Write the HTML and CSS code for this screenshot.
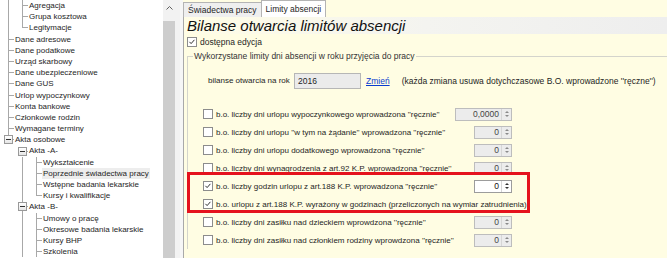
FILE: index.html
```html
<!DOCTYPE html>
<html>
<head>
    <meta charset="utf-8">
    <title>Bilanse otwarcia limitów absencji</title>
    <link rel="stylesheet" href="styles.css">
</head>
<body>
<div class="app">
    <div class="tree">
        <div class="node"><i class="v"></i><i class="t"></i><span>Agregacja</span></div>
        <div class="node"><i class="v"></i><i class="t"></i><span>Grupa kosztowa</span></div>
        <div class="node"><i class="v"></i><i class="l"></i><span>Legitymacje</span></div>
        <div class="node"><i class="t"></i><span>Dane adresowe</span></div>
        <div class="node"><i class="t"></i><span>Dane podatkowe</span></div>
        <div class="node"><i class="t"></i><span>Urząd skarbowy</span></div>
        <div class="node"><i class="t"></i><span>Dane ubezpieczeniowe</span></div>
        <div class="node"><i class="t"></i><span>Dane GUS</span></div>
        <div class="node"><i class="t"></i><span>Urlop wypoczynkowy</span></div>
        <div class="node"><i class="t"></i><span>Konta bankowe</span></div>
        <div class="node"><i class="t"></i><span>Członkowie rodzin</span></div>
        <div class="node"><i class="t"></i><span>Wymagane terminy</span></div>
        <div class="node"><i class="m last"><b></b></i><span>Akta osobowe</span></div>
        <div class="node"><i class="e"></i><i class="m first"><b></b></i><span>Akta -A-</span></div>
        <div class="node"><i class="e"></i><i class="v"></i><i class="t"></i><span>Wykształcenie</span></div>
        <div class="node"><i class="e"></i><i class="v"></i><i class="t"></i><span class="sel">Poprzednie świadectwa pracy</span></div>
        <div class="node"><i class="e"></i><i class="v"></i><i class="t"></i><span>Wstępne badania lekarskie</span></div>
        <div class="node"><i class="e"></i><i class="v"></i><i class="l"></i><span>Kursy i kwalifikacje</span></div>
        <div class="node"><i class="e"></i><i class="m"><b></b></i><span>Akta -B-</span></div>
        <div class="node"><i class="e"></i><i class="v"></i><i class="t"></i><span>Umowy o pracę</span></div>
        <div class="node"><i class="e"></i><i class="v"></i><i class="t"></i><span>Okresowe badania lekarskie</span></div>
        <div class="node"><i class="e"></i><i class="v"></i><i class="t"></i><span>Kursy BHP</span></div>
        <div class="node"><i class="e"></i><i class="v"></i><i class="t"></i><span>Szkolenia</span></div>
    </div>
    <div class="vscroll">
        <div class="arrow">
            <svg width="7" height="4" viewBox="0 0 7 4"><path d="M0.5 3.5 L3.5 0.5 L6.5 3.5" fill="none" stroke="#606060" stroke-width="1"/></svg>
        </div>
        <div class="thumb"></div>
    </div>
    <div class="gap"></div>
    <div class="panel">
        <div class="tabs">
            <div class="tab">Świadectwa pracy</div>
            <div class="tab active">Limity absencji</div>
        </div>
        <div class="page">
            <div class="title">Bilanse otwarcia limitów absencji</div>
            <div class="chk-line"><span class="cb on"><svg viewBox="0 0 10 10"><path d="M1.8 4.8 L3.9 7 L8 2.3" fill="none" stroke="#2a2a2a" stroke-width="1.2"/></svg></span><span class="txt">dostępna edycja</span></div>
            <fieldset class="group">
                <legend>Wykorzystane limity dni absencji w roku przyjęcia do pracy</legend>
                <div class="year">
                    <span class="year-label">bilanse otwarcia na rok</span>
                    <span class="year-input">2016</span>
                    <a class="link">Zmień</a>
                    <span class="note">(każda zmiana usuwa dotychczasowe B.O. wprowadzone ''ręczne'')</span>
                </div>
                <div class="opts">
                    <div class="opt"><span class="cb"></span><span class="txt">b.o. liczby dni urlopu wypoczynkowego wprowadzona ''ręcznie''</span>
                        <span class="spin wide"><span class="val">0,0000</span><span class="btns"><em class="up"></em><em class="down"></em></span></span></div>
                    <div class="opt"><span class="cb"></span><span class="txt">b.o. liczby dni urlopu ''w tym na żądanie'' wprowadzona ''ręcznie''</span>
                        <span class="spin"><span class="val">0</span><span class="btns"><em class="up"></em><em class="down"></em></span></span></div>
                    <div class="opt"><span class="cb"></span><span class="txt">b.o. liczby dni urlopu dodatkowego wprowadzona ''ręcznie''</span>
                        <span class="spin"><span class="val">0</span><span class="btns"><em class="up"></em><em class="down"></em></span></span></div>
                    <div class="opt"><span class="cb"></span><span class="txt">b.o. liczby dni wynagrodzenia z art.92 K.P. wprowadzona ''ręcznie''</span>
                        <span class="spin"><span class="val">0</span><span class="btns"><em class="up"></em><em class="down"></em></span></span></div>
                    <div class="opt"><span class="cb on"><svg viewBox="0 0 10 10"><path d="M1.8 4.8 L3.9 7 L8 2.3" fill="none" stroke="#2a2a2a" stroke-width="1.2"/></svg></span><span class="txt">b.o. liczby godzin urlopu z art.188 K.P. wprowadzona ''ręcznie''</span>
                        <span class="spin live"><span class="val">0</span><span class="btns"><em class="up"></em><em class="down"></em></span></span></div>
                    <div class="opt short"><span class="cb on"><svg viewBox="0 0 10 10"><path d="M1.8 4.8 L3.9 7 L8 2.3" fill="none" stroke="#2a2a2a" stroke-width="1.2"/></svg></span><span class="txt">b.o. urlopu z art.188 K.P. wyrażony w godzinach (przeliczonych na wymiar zatrudnienia)</span></div>
                    <div class="opt"><span class="cb"></span><span class="txt">b.o. liczby dni zasiłku nad dzieckiem wprowdzona ''ręcznie''</span>
                        <span class="spin"><span class="val">0</span><span class="btns"><em class="up"></em><em class="down"></em></span></span></div>
                    <div class="opt"><span class="cb"></span><span class="txt">b.o. liczby dni zasiłku nad członkiem rodziny wprowdzona ''ręcznie''</span>
                        <span class="spin"><span class="val">0</span><span class="btns"><em class="up"></em><em class="down"></em></span></span></div>
                    <div class="mark"></div>
                </div>
            </fieldset>
        </div>
    </div>
</div>
</body>
</html>
```
FILE: styles.css
```css
body {
    margin: 0;
    font-family: "Liberation Sans", Arial, sans-serif;
    font-size: 8.5px;
    color: #1e1e1e;
    background: #fff;
}

.app {
    display: flex;
    width: 667px;
    height: 258px;
    overflow: hidden;
}

/* tree on the left */
.tree {
    width: 163px;
    flex: none;
    background: #fff;
    font-size: 8px;
}

.node {
    display: flex;
    height: 11.2px;
    line-height: 11.2px;
    white-space: nowrap;
}

.node i {
    display: block;
    flex: none;
    width: 14px;
    height: 100%;
}

.node .v {
    background: linear-gradient(#a8a8a8, #a8a8a8) 8px 0 / 1px 100% no-repeat;
}

.node .t {
    background: linear-gradient(#a8a8a8, #a8a8a8) 8px 0 / 1px 100% no-repeat,
                linear-gradient(#a8a8a8, #a8a8a8) 8px 50% / 6px 1px no-repeat;
}

.node .l {
    background: linear-gradient(#a8a8a8, #a8a8a8) 8px 0 / 1px 50% no-repeat,
                linear-gradient(#a8a8a8, #a8a8a8) 8px 50% / 6px 1px no-repeat;
}

.node .m {
    display: flex;
    align-items: center;
    background: linear-gradient(#a8a8a8, #a8a8a8) 8px 0 / 1px 100% no-repeat,
                linear-gradient(#a8a8a8, #a8a8a8) 8px 50% / 6px 1px no-repeat;
}

.node .m.last {
    background: linear-gradient(#a8a8a8, #a8a8a8) 8px 0 / 1px 50% no-repeat,
                linear-gradient(#a8a8a8, #a8a8a8) 8px 50% / 6px 1px no-repeat;
}

.node .m.first {
    background: linear-gradient(#a8a8a8, #a8a8a8) 8px 50% / 1px 50% no-repeat,
                linear-gradient(#a8a8a8, #a8a8a8) 8px 50% / 6px 1px no-repeat;
}

.node .m b {
    display: flex;
    align-items: center;
    justify-content: center;
    width: 9px;
    height: 9px;
    margin-left: 4px;
    box-sizing: border-box;
    border: 1px solid #999;
    background: linear-gradient(#fff, #e6e6e6);
}

.node .m b::after {
    content: "";
    width: 5px;
    height: 1px;
    background: #333;
}

.node span {
    padding: 0 1px;
}

.node .sel {
    background: #ededed;
}

/* scrollbar */
.vscroll {
    width: 17px;
    flex: none;
    display: flex;
    flex-direction: column;
    background: #f2f2f2;
}

.arrow {
    height: 21px;
    display: flex;
    justify-content: center;
    padding-top: 6px;
    box-sizing: border-box;
    margin-right: 5px;
}

.thumb {
    flex: 1;
    background: #cdcdcd;
    margin-right: 5px;
}

.gap {
    width: 3px;
    flex: none;
    background: #f6f6f6;
}

/* right side */
.panel {
    flex: 1;
    display: flex;
    flex-direction: column;
    background: #fffde3;
}

.tabs {
    height: 17px;
    display: flex;
    align-items: flex-end;
}

.tab {
    height: 15px;
    line-height: 14px;
    padding: 0 4px;
    border: 1px solid #b4b4b4;
    border-bottom: none;
    background: #efefef;
    box-sizing: border-box;
    margin-right: -1px;
}

.tab.active {
    height: 17px;
    line-height: 17px;
    background: #fff;
}

.page {
    flex: 1;
    border-left: 1px solid #a9a9a9;
    padding-left: 3px;
    overflow: hidden;
}

.title {
    height: 17px;
    line-height: 17px;
    margin-left: -3px;
    padding-left: 3px;
    font-size: 15px;
    font-style: italic;
    color: #111;
    background: linear-gradient(to right, #fffde6, #f4f4f0 50%, #eeeeee);
}

.chk-line {
    display: flex;
    align-items: center;
    height: 12px;
    margin-top: 2px;
}

.cb {
    display: block;
    flex: none;
    width: 10px;
    height: 10px;
    box-sizing: border-box;
    border: 1px solid #8c8c8c;
    background: #fff;
}

.cb svg {
    display: block;
    width: 8px;
    height: 8px;
}

.txt {
    margin-left: 3px;
    white-space: nowrap;
}

.group {
    margin: 3px -20px 0 0;
    padding: 0 0 0 5px;
    border: 1px solid #d4d4cc;
    border-right: none;
    border-bottom: none;
}

.group legend {
    padding: 0 1px;
    line-height: 11px;
    color: #333;
}

.year {
    display: flex;
    align-items: center;
    height: 17px;
    margin-top: 10px;
    padding-left: 15px;
    white-space: nowrap;
}

.year-label {
    width: 86px;
    font-size: 8px;
}

.year-input {
    width: 67px;
    height: 16px;
    line-height: 14px;
    box-sizing: border-box;
    padding-left: 3px;
    border: 1px solid #b6b6b6;
    background: #ebebeb;
}

.link {
    margin-left: 5px;
    color: #0a3ccf;
    text-decoration: underline;
}

.note {
    margin-left: 12px;
}

.opts {
    position: relative;
    margin-top: 16px;
    font-size: 8px;
}

.opt {
    display: flex;
    align-items: center;
    width: 309px;
    height: 18px;
    margin-left: 10px;
}

.spin {
    display: flex;
    margin-left: auto;
    width: 38px;
    height: 13px;
    box-sizing: border-box;
    border: 1px solid #bdbdbd;
    background: #ececec;
    color: #444;
    font-size: 8.5px;
}

.spin.wide {
    width: 57px;
}

.spin.live {
    background: #fff;
    border-color: #9c9c9c;
    color: #111;
}

.spin .val {
    flex: 1;
    text-align: right;
    line-height: 11px;
    padding-right: 2px;
}

.spin .btns {
    width: 9px;
    display: flex;
    flex-direction: column;
    align-items: center;
    justify-content: space-evenly;
    border-left: 1px solid #d6d6d6;
}

.spin .up {
    width: 0;
    height: 0;
    border-left: 2px solid transparent;
    border-right: 2px solid transparent;
    border-bottom: 2px solid #8a8a8a;
}

.spin .down {
    width: 0;
    height: 0;
    border-left: 2px solid transparent;
    border-right: 2px solid transparent;
    border-top: 2px solid #8a8a8a;
}

.spin.live .up {
    border-bottom-color: #333;
}

.spin.live .down {
    border-top-color: #333;
}

/* red annotation frame */
.mark {
    position: absolute;
    left: -6px;
    top: 67px;
    width: 343px;
    height: 41px;
    box-sizing: border-box;
    border: 3px solid #e5121d;
}
```
